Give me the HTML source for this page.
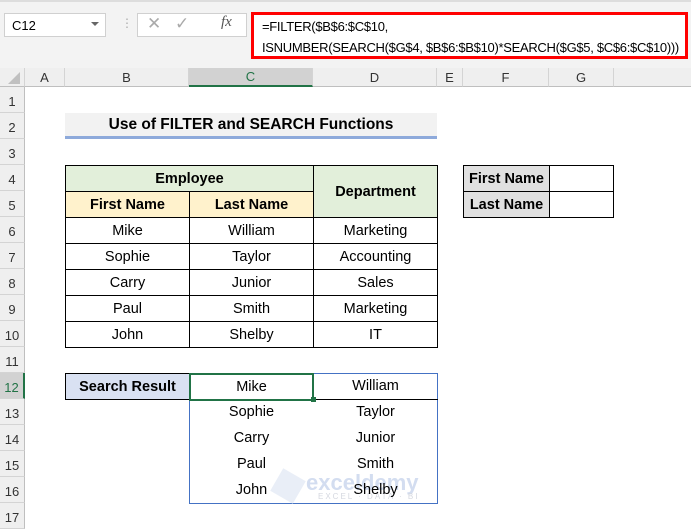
<!DOCTYPE html><html><head><style>
body{margin:0;width:691px;height:519px;overflow:hidden;background:#fff;font-family:"Liberation Sans",sans-serif;position:relative}
div{position:absolute;box-sizing:border-box}
.c{display:flex;align-items:center;justify-content:center;font-size:14.5px;color:#000}
.b{font-weight:bold}
.rh{left:0;width:25px;height:26px;border-bottom:1px solid #d4d4d4;border-right:1px solid #bfbfbf;background:#efefef;font-size:13px;color:#333;display:flex;align-items:flex-end;justify-content:center;padding-bottom:3px}
.ch{top:68px;height:19px;background:#efefef;border-right:1px solid #d4d4d4;border-bottom:1px solid #bfbfbf;font-size:13px;color:#333;display:flex;align-items:center;justify-content:center}
</style></head><body>
<div style="left:0;top:0;width:691px;height:68px;background:#f3f3f3;border-top:2px solid #ddd"></div>
<div style="left:4px;top:13px;width:102px;height:24px;background:#fff;border:1px solid #d0d0d0;font-size:13px;padding:4px 0 0 7px">C12</div>
<div style="left:91px;top:22px;width:0;height:0;border-left:4px solid transparent;border-right:4px solid transparent;border-top:4px solid #666"></div>
<div style="left:121px;top:16px;color:#aaa;font-size:12px">⋮</div>
<div style="left:137px;top:13px;width:110px;height:24px;background:#fff;border:1px solid #d0d0d0"></div>
<div style="left:147px;top:14px;color:#aaa;font-size:17px">✕</div>
<div style="left:175px;top:14px;color:#aaa;font-size:17px">✓</div>
<div style="left:221px;top:14px;color:#555;font-size:15px;font-family:'Liberation Serif';font-style:italic">fx</div>
<div style="left:251px;top:12px;width:437px;height:47px;background:#fff;border:3px solid #f00;font-size:13px;line-height:21px;padding:1px 0 0 8px;white-space:nowrap;letter-spacing:-0.3px">=FILTER($B$6:$C$10,<br>ISNUMBER(SEARCH($G$4, $B$6:$B$10)*SEARCH($G$5, $C$6:$C$10)))</div>
<div class="ch" style="left:0;width:25px"></div>
<div style="left:8px;top:72px;width:0;height:0;border-left:12px solid transparent;border-bottom:12px solid #c0c0c0"></div>
<div class="ch" style="left:25px;width:40px">A</div>
<div class="ch" style="left:65px;width:124px">B</div>
<div class="ch" style="left:189px;width:124px;background:#d2d2d2;border-bottom:2px solid #217346;color:#217346">C</div>
<div class="ch" style="left:313px;width:124px">D</div>
<div class="ch" style="left:437px;width:26px">E</div>
<div class="ch" style="left:463px;width:86px">F</div>
<div class="ch" style="left:549px;width:65px">G</div>
<div class="ch" style="left:614px;width:77px;border-right:none"></div>
<div class="rh" style="top:87px">1</div><div class="rh" style="top:113px">2</div><div class="rh" style="top:139px">3</div><div class="rh" style="top:165px">4</div><div class="rh" style="top:191px">5</div><div class="rh" style="top:217px">6</div><div class="rh" style="top:243px">7</div><div class="rh" style="top:269px">8</div><div class="rh" style="top:295px">9</div><div class="rh" style="top:321px">10</div><div class="rh" style="top:347px">11</div><div class="rh" style="top:373px;background:#d2d2d2;color:#217346;border-right:2px solid #217346">12</div><div class="rh" style="top:399px">13</div><div class="rh" style="top:425px">14</div><div class="rh" style="top:451px">15</div><div class="rh" style="top:477px">16</div><div class="rh" style="top:503px">17</div>
<div class="c b" style="left:65px;top:113px;width:372px;height:26px;background:#f2f2f2;border-bottom:3px solid #8eaadb;font-size:15.5px">Use of FILTER and SEARCH Functions</div>
<div class="c b" style="left:65px;top:165px;width:249px;height:27px;background:#e2efda;border:1px solid #000">Employee</div>
<div class="c b" style="left:313px;top:165px;width:125px;height:53px;background:#e2efda;border:1px solid #000">Department</div>
<div class="c b" style="left:65px;top:191px;width:125px;height:27px;background:#fff2cc;border:1px solid #000">First Name</div>
<div class="c b" style="left:189px;top:191px;width:125px;height:27px;background:#fff2cc;border:1px solid #000">Last Name</div>
<div class="c" style="left:65px;top:217px;width:125px;height:27px;border:1px solid #000">Mike</div><div class="c" style="left:189px;top:217px;width:125px;height:27px;border:1px solid #000">William</div><div class="c" style="left:313px;top:217px;width:125px;height:27px;border:1px solid #000">Marketing</div>
<div class="c" style="left:65px;top:243px;width:125px;height:27px;border:1px solid #000">Sophie</div><div class="c" style="left:189px;top:243px;width:125px;height:27px;border:1px solid #000">Taylor</div><div class="c" style="left:313px;top:243px;width:125px;height:27px;border:1px solid #000">Accounting</div>
<div class="c" style="left:65px;top:269px;width:125px;height:27px;border:1px solid #000">Carry</div><div class="c" style="left:189px;top:269px;width:125px;height:27px;border:1px solid #000">Junior</div><div class="c" style="left:313px;top:269px;width:125px;height:27px;border:1px solid #000">Sales</div>
<div class="c" style="left:65px;top:295px;width:125px;height:27px;border:1px solid #000">Paul</div><div class="c" style="left:189px;top:295px;width:125px;height:27px;border:1px solid #000">Smith</div><div class="c" style="left:313px;top:295px;width:125px;height:27px;border:1px solid #000">Marketing</div>
<div class="c" style="left:65px;top:321px;width:125px;height:27px;border:1px solid #000">John</div><div class="c" style="left:189px;top:321px;width:125px;height:27px;border:1px solid #000">Shelby</div><div class="c" style="left:313px;top:321px;width:125px;height:27px;border:1px solid #000">IT</div>
<div class="c b" style="left:463px;top:165px;width:87px;height:27px;background:#e0e0e0;border:1px solid #000">First Name</div><div style="left:549px;top:165px;width:65px;height:27px;border:1px solid #000"></div>
<div class="c b" style="left:463px;top:191px;width:87px;height:27px;background:#e0e0e0;border:1px solid #000">Last Name</div><div style="left:549px;top:191px;width:65px;height:27px;border:1px solid #000"></div>
<div class="c b" style="left:65px;top:373px;width:125px;height:27px;background:#d9e1f2;border:1px solid #000">Search Result</div>
<div style="left:189px;top:373px;width:249px;height:131px;border:1px solid #4472c4"></div>
<div style="left:313px;top:399px;width:125px;height:1px;background:#000"></div>
<div class="c" style="left:313px;top:373px;width:125px;height:26px">William</div>
<div class="c" style="left:189px;top:373px;width:125px;height:28px;border:2px solid #217346">Mike</div>
<div style="left:311px;top:397px;width:5px;height:5px;background:#217346"></div>
<div class="c" style="left:189px;top:399px;width:125px;height:26px">Sophie</div><div class="c" style="left:313px;top:399px;width:125px;height:26px">Taylor</div>
<div class="c" style="left:189px;top:425px;width:125px;height:26px">Carry</div><div class="c" style="left:313px;top:425px;width:125px;height:26px">Junior</div>
<div class="c" style="left:189px;top:451px;width:125px;height:26px">Paul</div><div class="c" style="left:313px;top:451px;width:125px;height:26px">Smith</div>
<div style="left:275px;top:473px;width:26px;height:26px;background:#e4eaf5;transform:rotate(30deg);opacity:.8"></div>
<div style="left:306px;top:470px;font-size:22px;color:#d3ddf0;font-weight:bold">exceldemy</div>
<div style="left:318px;top:492px;font-size:8px;color:#d5d8e0;letter-spacing:2px">EXCEL · DATA · BI</div>
<div class="c" style="left:189px;top:477px;width:125px;height:26px">John</div><div class="c" style="left:313px;top:477px;width:125px;height:26px">Shelby</div>
</body></html>
